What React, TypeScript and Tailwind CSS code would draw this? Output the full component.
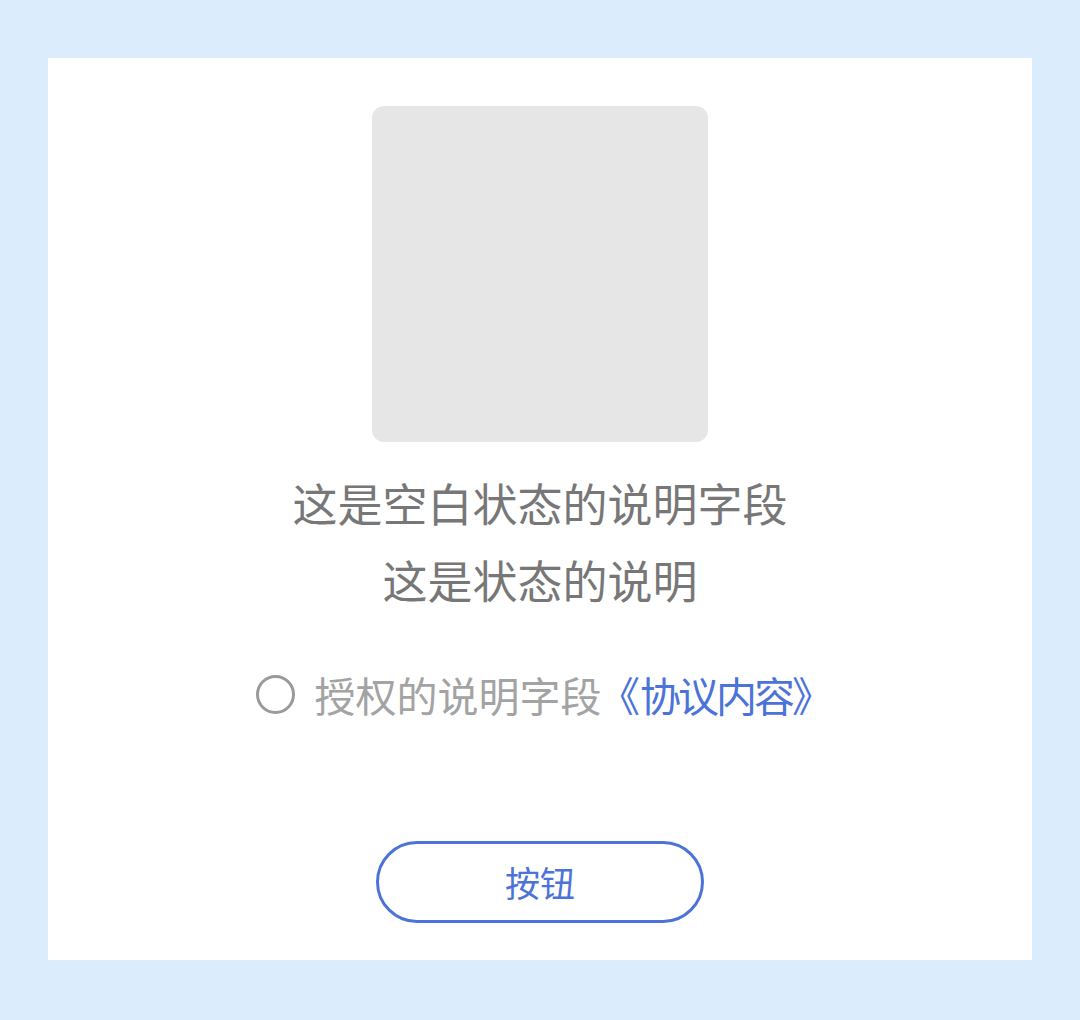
import React, { useState } from 'react'

const App = () => {
  const [checked, setChecked] = useState(false)

  return (
    <div className="min-h-screen w-full bg-[#dbedfd] px-12 pt-[58px] pb-[60px] font-['Noto_Sans_CJK_SC',sans-serif]">
      <div className="flex h-[902px] flex-col items-center bg-white pt-12">
        <div className="h-[336px] w-[336px] rounded-xl bg-[#e6e6e6]" />

        <div className="mt-[22px] text-center text-[45px] leading-[77px] text-[#777777]">
          <p>这是空白状态的说明字段</p>
          <p>这是状态的说明</p>
        </div>

        <div className="mt-[48px] flex items-center gap-[20px]">
          <button
            onClick={() => setChecked(!checked)}
            className="h-[39px] w-[39px] rounded-full border-[3px] border-[#9a9a9a] bg-white"
          >
            {checked && <span className="m-auto block h-[19px] w-[19px] rounded-full bg-[#4b73d8]" />}
          </button>
          <p className="text-[41px] leading-[56px] text-[#a3a3a3]">
            授权的说明字段
            <span className="ml-[18px] text-[#4b73d8] [font-feature-settings:'halt']">《</span>
            <span className="tracking-[-3px] text-[#4b73d8]">协议内容</span>
            <span className="pr-[12px] text-[#4b73d8] [font-feature-settings:'halt']">》</span>
          </p>
        </div>

        <button className="mt-[119px] h-[82px] w-[328px] rounded-full border-[3px] border-[#4b73d8] bg-white text-[35px] text-[#4b73d8]">
          按钮
        </button>
      </div>
    </div>
  )
}

export default App
